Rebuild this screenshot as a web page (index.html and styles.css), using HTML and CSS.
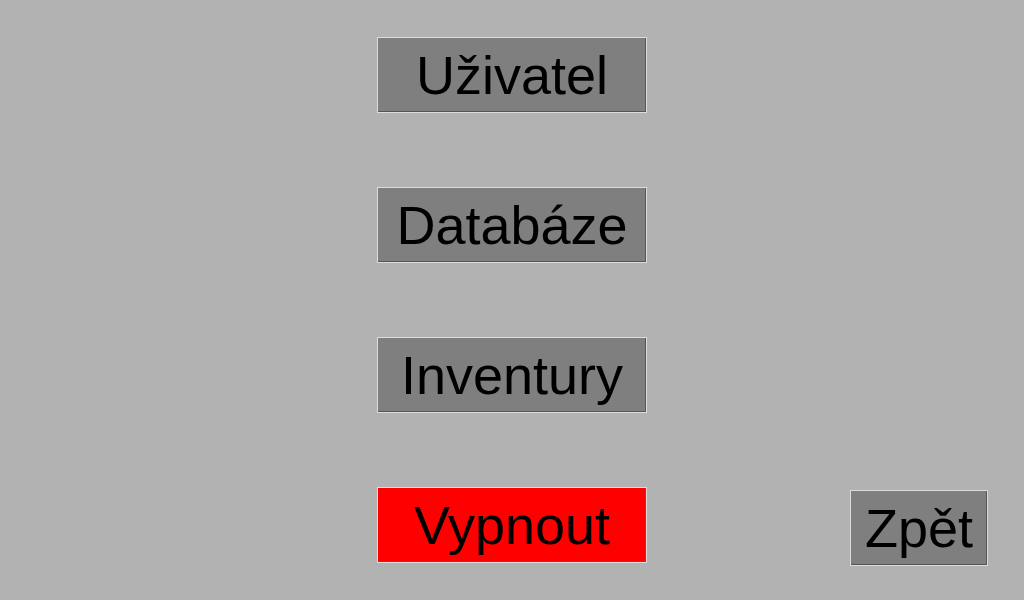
FILE: index.html
```html
<!DOCTYPE html>
<html lang="cs">
<head>
<meta charset="utf-8">
<title>Menu</title>
<link rel="stylesheet" href="styles.css">
</head>
<body>
<div class="screen">
  <div class="side"></div>
  <nav class="menu">
    <button class="btn">Uživatel</button>
    <button class="btn">Databáze</button>
    <button class="btn">Inventury</button>
    <button class="btn btn-red">Vypnout</button>
  </nav>
  <div class="side side-right">
    <button class="btn btn-back">Zpět</button>
  </div>
</div>
</body>
</html>
```

FILE: styles.css
```css
html, body {
  margin: 0;
  padding: 0;
  background: #b2b2b2;
}
.screen {
  width: 1024px;
  height: 600px;
  display: grid;
  grid-template-columns: 1fr 270px 1fr;
}
.menu {
  display: flex;
  flex-direction: column;
  gap: 74px;
  padding-top: 37px;
}
.side-right {
  display: flex;
  justify-content: flex-end;
  align-items: flex-end;
  padding: 0 36px 34px 0;
}
.btn {
  box-sizing: border-box;
  width: 270px;
  height: 76px;
  margin: 0;
  padding: 0;
  background: #7f7f7f;
  border: 1px solid #dcdcdc;
  box-shadow: inset -1px -1px 0 #555555;
  font-family: "Liberation Sans", Arial, sans-serif;
  font-size: 54px;
  color: #000;
  display: flex;
  align-items: center;
  justify-content: center;
  line-height: 1;
}
.btn-red {
  background: #ff0000;
}
.btn-back {
  width: 138px;
}
```
